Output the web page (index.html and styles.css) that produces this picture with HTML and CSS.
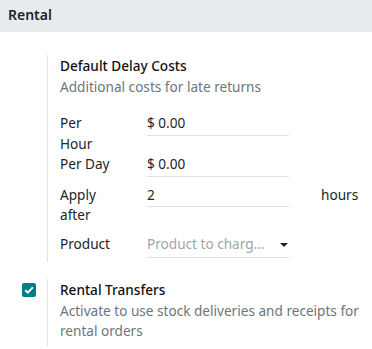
FILE: index.html
```html
<!DOCTYPE html>
<html lang="en">
<head>
  <meta charset="UTF-8">
  <title>Rental settings</title>
  <link rel="stylesheet" href="styles.css">
</head>
<body>
  <h2 class="section-title">Rental</h2>

  <div class="setting">
    <div class="setting-left"></div>
    <div class="setting-right">
      <div class="setting-name">Default Delay Costs</div>
      <div class="setting-help">Additional costs for late returns</div>

      <div class="fields">
        <div class="field-row">
          <label class="field-label">Per<br>Hour</label>
          <div class="field-input">$ 0.00</div>
        </div>
        <div class="field-row gap-after">
          <label class="field-label">Per Day</label>
          <div class="field-input">$ 0.00</div>
        </div>
        <div class="field-row gap-after">
          <label class="field-label">Apply<br>after</label>
          <div class="field-input">2</div>
          <span class="field-unit">hours</span>
        </div>
        <div class="field-row">
          <label class="field-label">Product</label>
          <div class="field-input select">
            <span class="placeholder">Product to charg…</span>
            <span class="caret"></span>
          </div>
        </div>
      </div>
    </div>
  </div>

  <div class="setting second">
    <div class="setting-left">
      <span class="checkbox">
        <svg width="10" height="8" viewBox="0 0 10 8"><path d="M1.2 4.2 L3.8 6.6 L8.8 1.4" fill="none" stroke="#fff" stroke-width="2"/></svg>
      </span>
    </div>
    <div class="setting-right">
      <div class="setting-name">Rental Transfers</div>
      <div class="setting-help">Activate to use stock deliveries and receipts for rental orders</div>
    </div>
  </div>
</body>
</html>
```

FILE: styles.css
```css
body { margin: 0; font-family: "Noto Sans", sans-serif; font-size: 13.6px; line-height: 20.5px; color: #212529; background: #fff; }

/* Bandeau de section */
.section-title { margin: 0; height: 32px; padding: 0 8px; background: #e9ecef; font-size: 14px; font-weight: 600; line-height: 30px; }

/* Bloc de réglage */
.setting { display: flex; margin-top: 23px; }
.setting.second { margin-top: 17px; }
.setting-left { width: 47px; flex: none; display: flex; justify-content: flex-end; padding-right: 11px; box-sizing: border-box; padding-top: 2px; }
.setting-right { flex: 1; border-left: 1px solid #dee2e6; padding: 1px 12px 4px 12px; }
.setting-name { font-weight: 500; color: #111; }
.setting-help { color: #6c757d; }

.checkbox { width: 14px; height: 14px; border-radius: 2px; background: #017e84; display: flex; align-items: center; justify-content: center; margin-top: 2px; }

/* Champs */
.fields { margin-top: 16px; }
.field-row { display: flex; align-items: flex-start; }
.field-row.gap-after { margin-bottom: 8px; }
.field-label { width: 87px; flex: none; }
.field-input { width: 142px; flex: none; border-bottom: 1px solid #dee2e6; padding-bottom: 1px; display: flex; align-items: center; }
.field-input.select { justify-content: space-between; padding-bottom: 3px; }
.placeholder { color: #a0a5ab; }
.caret { width: 0; height: 0; border-left: 4px solid transparent; border-right: 4px solid transparent; border-top: 4px solid #222; margin-right: 1px; margin-top: 2px; }
.field-unit { margin-left: 32px; }
```
